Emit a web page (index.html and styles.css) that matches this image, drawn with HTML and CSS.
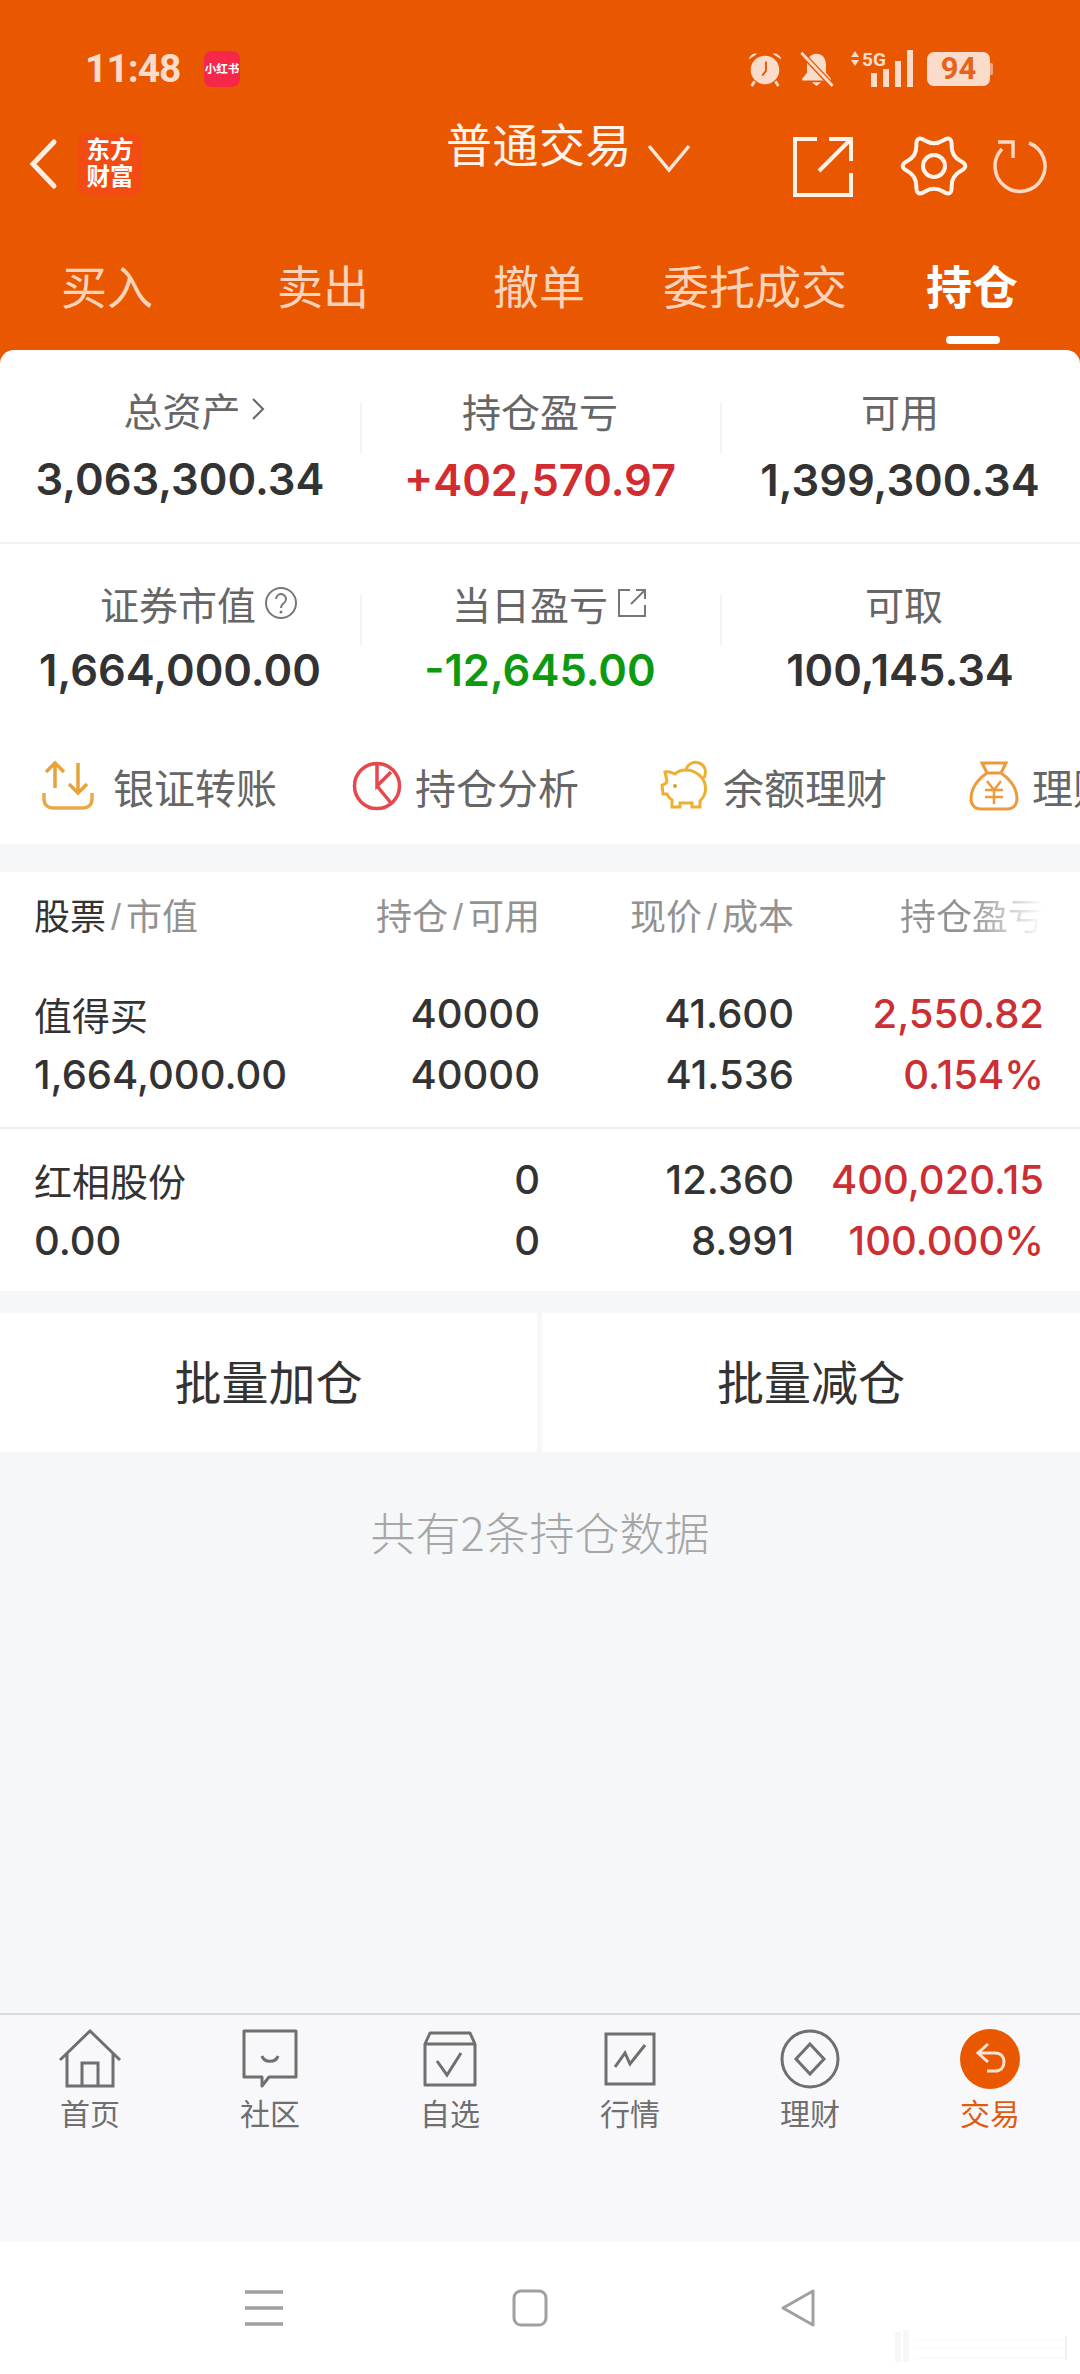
FILE: index.html
```html
<!DOCTYPE html>
<html lang="zh-CN">
<head>
<meta charset="utf-8">
<title>持仓</title>
<link rel="stylesheet" href="styles.css">
</head>
<body>
<div class="app">
  <header class="top">
    <div class="status">
      <div class="status-left">
        <span class="clock">11:48</span>
        <span class="app-badge">小红书</span>
      </div>
      <div class="status-right">
        <svg width="38" height="38" viewBox="0 0 40 40"><circle cx="20" cy="21" r="15" fill="#fbdccb"/><path d="M3 10a7 7 0 0 1 9-6zM37 10a7 7 0 0 0-9-6z" fill="#fbdccb"/><path d="M9 33l-3 5M31 33l3 5" stroke="#fbdccb" stroke-width="3"/><path d="M21 12v10l-4 5" fill="none" stroke="#e95800" stroke-width="2"/></svg>
        <svg width="37" height="38" viewBox="0 0 38 40"><path d="M19 4c-7 0-10 6-10 12v8l-5 6v2h30v-2l-5-6v-8c0-6-3-12-10-12zM14 34h10l-5 4z" fill="#fbdccb"/><path d="M3 3l33 35" stroke="#e95800" stroke-width="6"/><path d="M3 3l33 35" stroke="#fbdccb" stroke-width="3"/></svg>
        <svg width="64" height="40" viewBox="0 0 64 40"><path d="M2 8l4-6 4 6zM2 11l4 6 4-6z" fill="#fbdccb"/><text class="st-5g" x="13" y="17">5G</text><rect x="22" y="24" width="6" height="14" fill="#fbdccb"/><rect x="34" y="20" width="6" height="18" fill="#fbdccb"/><rect x="46" y="12" width="6" height="26" fill="#fbdccb"/><rect x="58" y="1" width="6" height="37" fill="#fbdccb"/></svg>
        <span class="battery">94</span>
      </div>
    </div>
    <div class="nav">
      <svg width="30" height="50" viewBox="0 0 30 50"><path d="M26 3L5 25l21 22" fill="none" stroke="#fdeee5" stroke-width="5" stroke-linecap="round"/></svg>
      <div class="logo"><span>东方</span><span>财富</span></div>
      <div class="nav-title">普通交易
        <svg width="44" height="28" viewBox="0 0 44 28"><path d="M2 2l20 24L42 2" fill="none" stroke="#fbe6da" stroke-width="3.500"/></svg>
      </div>
      <div class="nav-icons">
        <svg class="ic-share" width="60" height="60" viewBox="0 0 60 60"><path d="M24 2H2v56h56V36M36 2h22v22M57 3L26 34" fill="none" stroke="#fff3ec" stroke-width="4"/></svg>
        <svg class="ic-gear" width="62" height="60" viewBox="0 0 62 60"><path d="M22 3.500Q31 9 40 3.500Q49 -2 48.650 8.500Q48.300 19 57.650 24Q67 29 57.650 34Q48.300 39 48.650 49.500Q49 60 40 54.500Q31 49 22 54.500Q13 60 13.350 49.500Q13.700 39 4.350 34Q-5 29 4.350 24Q13.700 19 13.350 8.500Q13 -2 22 3.500z" fill="none" stroke="#fff3ec" stroke-width="4"/><circle cx="31" cy="29" r="11" fill="none" stroke="#fff3ec" stroke-width="4"/></svg>
        <svg class="ic-reload" width="54" height="54" viewBox="0 0 54 54"><path d="M35 3A25 25 0 1 1 8 9M4 2H19V18" fill="none" stroke="#fbd9c5" stroke-width="3.500"/></svg>
      </div>
    </div>
    <nav class="tabs">
      <span class="tab">买入</span>
      <span class="tab">卖出</span>
      <span class="tab">撤单</span>
      <span class="tab">委托成交</span>
      <span class="tab tab-on">持仓</span>
    </nav>
  </header>

  <section class="summary">
    <div class="sum-row">
      <div class="sum-cell"><div class="sum-label sum-label-up">总资产<svg width="14" height="24" viewBox="0 0 14 24"><path d="M2 2l10 10L2 22" fill="none" stroke="#666" stroke-width="2"/></svg></div><div class="sum-val">3,063,300.34</div></div>
      <div class="sum-cell sum-bar"><div class="sum-label">持仓盈亏</div><div class="sum-val red">+402,570.97</div></div>
      <div class="sum-cell sum-bar"><div class="sum-label">可用</div><div class="sum-val">1,399,300.34</div></div>
    </div>
    <div class="sum-row sum-row2">
      <div class="sum-cell"><div class="sum-label sum-label-wide">证券市值<svg width="34" height="34" viewBox="0 0 34 34"><circle cx="17" cy="17" r="15" fill="none" stroke="#777" stroke-width="2"/><path d="M12 13a5 5 0 1 1 8 4c-2 1.500-3 2-3 5" fill="none" stroke="#777" stroke-width="2"/><circle cx="17" cy="26" r="1.500" fill="#777"/></svg></div><div class="sum-val">1,664,000.00</div></div>
      <div class="sum-cell sum-bar"><div class="sum-label sum-label-mid">当日盈亏<svg width="32" height="32" viewBox="0 0 32 32"><path d="M14 3H3v26h26V18M20 3h9v9M28 4L15 17" fill="none" stroke="#777" stroke-width="2"/></svg></div><div class="sum-val green">-12,645.00</div></div>
      <div class="sum-cell sum-bar"><div class="sum-label sum-label-nudge">可取</div><div class="sum-val">100,145.34</div></div>
    </div>
    <div class="tools">
      <div class="tool tool-a"><svg width="52" height="50" viewBox="0 0 52 50"><path d="M13 27V2M4 11l9-9 9 9M36 2v30M27 23l9 9 9-9" fill="none" stroke="#e9a23b" stroke-width="3.500"/><path d="M2 32v6c0 6 4 9 9 9h30c5 0 9-3 9-9v-6" fill="none" stroke="#eaa848" stroke-width="3.500"/></svg><span>银证转账</span></div>
      <div class="tool tool-b"><svg width="50" height="50" viewBox="0 0 50 50"><circle cx="25" cy="25" r="22.500" fill="none" stroke="#e5484d" stroke-width="3.500"/><path d="M25 3v22l14-14M25 25l14 17" fill="none" stroke="#e5484d" stroke-width="3.500"/></svg><span>持仓分析</span></div>
      <div class="tool tool-c"><svg width="50" height="50" viewBox="0 0 50 50"><path d="M26 9c-4 0-8 1-11 4-2-1-6-3-10-2l2 9c0 3-3 3-5 4l1 9h4c1 3 2 4 5 6v7h8v-4h12v4h8v-6c6-6 7-14 3-22-4-5-10-9-17-9z" fill="none" stroke="#eeb030" stroke-width="3"/><path d="M26 9C27 3 34 0 39 2c6 2 8 8 5 15" fill="none" stroke="#eeb030" stroke-width="3"/><circle cx="15" cy="25" r="2" fill="#e0a030"/></svg><span>余额理财</span></div>
      <div class="tool tool-d"><svg width="50" height="50" viewBox="0 0 50 50"><path d="M13 2h24l-5 10H18zM18 12C8 19 2 28 2 38c0 6 4 10 10 10h26c6 0 10-4 10-10 0-10-6-19-16-26" fill="none" stroke="#ee9a3c" stroke-width="3"/><path d="M18 20l7 9 7-9M16 29h18M16 36h18M25 29v14" fill="none" stroke="#ee9a3c" stroke-width="2.500"/></svg><span>理财</span></div>
    </div>
  </section>

  <section class="holdings">
    <div class="h-row h-head">
      <div class="h-c1"><b>股票</b><i>/</i>市值</div>
      <div class="h-c2">持仓<i>/</i>可用</div>
      <div class="h-c3">现价<i>/</i>成本</div>
      <div class="h-c4 h-fade">持仓盈亏</div>
    </div>
    <div class="h-row h-item">
      <div class="h-c1"><div class="h-name">值得买</div><div>1,664,000.00</div></div>
      <div class="h-c2"><div>40000</div><div>40000</div></div>
      <div class="h-c3"><div>41.600</div><div>41.536</div></div>
      <div class="h-c4 red"><div>2,550.82</div><div>0.154%</div></div>
    </div>
    <div class="h-row h-item h-line">
      <div class="h-c1"><div class="h-name">红相股份</div><div>0.00</div></div>
      <div class="h-c2"><div>0</div><div>0</div></div>
      <div class="h-c3"><div>12.360</div><div>8.991</div></div>
      <div class="h-c4 red"><div>400,020.15</div><div>100.000%</div></div>
    </div>
  </section>

  <div class="batch">
    <div class="batch-btn">批量加仓</div>
    <div class="batch-btn">批量减仓</div>
  </div>

  <main class="rest">共有2条持仓数据</main>

  <footer class="tabbar">
    <div class="tb"><svg width="64" height="60" viewBox="0 0 64 60"><path d="M2 31L32 2l30 29M9 25v32h46V25M24 57V34h16v23" fill="none" stroke="#6f6f6f" stroke-width="3"/></svg><span>首页</span></div>
    <div class="tb"><svg width="56" height="60" viewBox="0 0 56 60"><path d="M2 2h52v46H27l-7 9v-9H2z" fill="none" stroke="#6f6f6f" stroke-width="3" stroke-linejoin="round"/><path d="M20 27c2 7 14 7 16 0" fill="none" stroke="#6f6f6f" stroke-width="3"/></svg><span>社区</span></div>
    <div class="tb"><svg width="54" height="56" viewBox="0 0 54 56"><path d="M2 13L7 2h40l5 11v41H2zM2 13h50" fill="none" stroke="#6f6f6f" stroke-width="3" stroke-linejoin="round"/><path d="M14 30l10 14 14-22" fill="none" stroke="#6f6f6f" stroke-width="3"/></svg><span>自选</span></div>
    <div class="tb"><svg width="52" height="54" viewBox="0 0 52 54"><path d="M2 2h48v50H2z" fill="none" stroke="#6f6f6f" stroke-width="3"/><path d="M11 35l10-14 5 11 15-19" fill="none" stroke="#6f6f6f" stroke-width="3"/></svg><span>行情</span></div>
    <div class="tb"><svg width="60" height="60" viewBox="0 0 60 60"><circle cx="30" cy="30" r="28" fill="none" stroke="#6f6f6f" stroke-width="3"/><path d="M30 15l14 15-14 15-14-15z" fill="none" stroke="#6f6f6f" stroke-width="3"/></svg><span>理财</span></div>
    <div class="tb tb-on"><svg width="60" height="60" viewBox="0 0 60 60"><circle cx="30" cy="30" r="30" fill="#e95800"/><path d="M28 15L18 24l10 9M18 24h17c6 0 9 4 9 9s-3 9-9 9H27" fill="none" stroke="#fde3d3" stroke-width="3"/></svg><span>交易</span></div>
  </footer>

  <div class="sysbar">
    <svg width="38" height="38" viewBox="0 0 38 38"><path d="M0 3h38M0 19h38M0 35h38" stroke="#a0a0a0" stroke-width="3.500"/></svg>
    <svg width="36" height="38" viewBox="0 0 36 38"><rect x="2" y="2" width="32" height="34" rx="7" fill="none" stroke="#a0a0a0" stroke-width="3"/></svg>
    <svg width="36" height="38" viewBox="0 0 36 38"><path d="M33 2L3 19l30 17z" fill="none" stroke="#a0a0a0" stroke-width="3" stroke-linejoin="round"/></svg>
    <!-- faint watermark in the corner -->
    <svg class="wm" width="180" height="34" viewBox="0 0 180 34"><path d="M8 2v30M16 0v32" stroke="#f7f7f7" stroke-width="6"/><path d="M24 10h150M24 18h150M24 28h150" stroke="#fcfcfc" stroke-width="2"/><path d="M176 6v24" stroke="#f0f0f0" stroke-width="2"/></svg>
  </div>
</div>
</body>
</html>
```

FILE: styles.css
```css
* {
    box-sizing: border-box;
}

html, body {
    margin: 0;
    padding: 0;
}

body {
    width: 1080px;
    height: 2374px;
    overflow: hidden;
    font-family: "Liberation Sans", "Noto Sans CJK SC", sans-serif;
    background: #fff;
}

.app {
    display: flex;
    flex-direction: column;
    width: 1080px;
    height: 2374px;
    background: #f6f7f9;
}

svg {
    display: block;
    flex: none;
    overflow: visible;
}

/* orange head */
.top {
    height: 364px;
    background: #e95800;
    color: #fff;
}

.status {
    display: flex;
    justify-content: space-between;
    align-items: center;
    height: 50px;
    margin-top: 44px;
    padding: 0 90px 0 85px;
}

.status-left, .status-right {
    display: flex;
    align-items: center;
}

.clock {
    width: 119px;
    font-family: Roboto, sans-serif;
    font-size: 39px;
    font-weight: 700;
    letter-spacing: -1px;
    color: #fbdccb;
}

.app-badge {
    width: 36px;
    height: 36px;
    border-radius: 8px;
    background: #f5284a;
    color: #fff;
    font-size: 11.500px;
    font-weight: 700;
    line-height: 36px;
    text-align: center;
    white-space: nowrap;
}

.status-right { gap: 14px; }

.st-5g {
    font: 700 19px Roboto, sans-serif;
    fill: #fbdccb;
}

.battery {
    position: relative;
    width: 63px;
    height: 34px;
    border-radius: 7px;
    background: #fbdccb;
    color: #e5631b;
    font: 700 31px/34px Roboto, sans-serif;
    text-align: center;
}

.battery::after {
    content: "";
    position: absolute;
    left: 100%;
    top: 11px;
    width: 3px;
    height: 12px;
    border-radius: 0 2px 2px 0;
    background: #f2a47a;
}

.nav {
    display: flex;
    align-items: center;
    height: 140px;
    padding: 0 32px 0 28px;
}

.logo {
    display: flex;
    flex-direction: column;
    justify-content: center;
    width: 64px;
    height: 62px;
    margin-left: 20px;
    border-radius: 9px;
    background: #f34b14;
    color: #fff;
    font-size: 23.500px;
    font-weight: 700;
    line-height: 27px;
    text-align: center;
}

.nav-title {
    display: flex;
    align-items: center;
    gap: 15px;
    margin-left: 304px;
    margin-top: -44px;
    font-size: 46px;
    letter-spacing: 0.5px;
    color: #fff3ec;
    white-space: nowrap;
}

.nav-title svg {
    margin-top: 32px;
}

.nav-icons {
    display: flex;
    align-items: center;
    margin-left: auto;
    margin-top: 6px;
}

.ic-gear { margin-left: 50px; }
.ic-reload { margin-left: 29px; }

.tabs {
    display: grid;
    grid-template-columns: 214px 218px 214px 218px 216px;
    height: 116px;
    padding-top: 22px;
}

.tab {
    font-size: 46px;
    line-height: 64px;
    text-align: center;
    color: #fbd3bb;
    white-space: nowrap;
}

.tab-on {
    position: relative;
    color: #fff;
    font-weight: 700;
}

.tab-on::after {
    content: "";
    position: absolute;
    left: 82px;
    top: 80px;
    width: 54px;
    height: 8px;
    border-radius: 4px;
    background: #fff;
}

/* account summary, rounded top sits over the orange */
.summary {
    height: 494px;
    margin-top: -14px;
    border-radius: 14px 14px 0 0;
    background: #fff;
}

.sum-row {
    display: grid;
    grid-template-columns: 360px 360px 360px;
    height: 194px;
    padding-top: 36px;
    border-bottom: 2px solid #f2f2f2;
}

.sum-row2 {
    height: 188px;
    padding-top: 35px;
    border-bottom: 0;
}

.sum-cell {
    position: relative;
    text-align: center;
}

.sum-bar::before {
    content: "";
    position: absolute;
    left: 0;
    top: 17px;
    width: 2px;
    height: 50px;
    background: #f4f4f4;
}

.sum-row2 .sum-bar::before { top: 16px; }

.sum-label {
    display: flex;
    justify-content: center;
    align-items: center;
    gap: 8px;
    height: 48px;
    font-size: 39px;
    color: #666;
}

.sum-label-up {
    margin-top: -1px;
    margin-bottom: 1px;
    padding-left: 28px;
    gap: 10px;
}

.sum-label-wide { padding-left: 38px; }
.sum-label-mid { padding-left: 20px; }
.sum-label-nudge { padding-left: 8px; }

.sum-val {
    margin-top: 20px;
    font-family: Inter, sans-serif;
    font-size: 43.500px;
    line-height: 52px;
    font-weight: 600;
    color: #333;
}

.sum-val.red { color: #d22b30; }
.sum-val.green { color: #0d9a10; }

.sum-row2 .sum-val { margin-top: 17px; }

.tools {
    display: flex;
    align-items: center;
    height: 112px;
    padding: 0 0 5px 42px;
    overflow: hidden;
    white-space: nowrap;
    font-size: 41px;
    color: #666;
}

.tool {
    display: flex;
    align-items: center;
    flex: none;
    gap: 19px;
}

.tool-a { width: 310px; }
.tool-b { width: 308px; gap: 13px; }
.tool-c { width: 309px; gap: 13px; }
.tool-d { gap: 13px; }

/* holdings table */
.holdings {
    margin-top: 28px;
    background: #fff;
}

.h-row {
    display: grid;
    grid-template-columns: 34px 270px 236px 254px 250px 36px;
    grid-template-areas: ". a b c d .";
}

.h-c1 { grid-area: a; }
.h-c2 { grid-area: b; text-align: right; }
.h-c3 { grid-area: c; text-align: right; }
.h-c4 { grid-area: d; text-align: right; }

.h-head {
    height: 88px;
    padding-bottom: 5px;
    align-items: center;
    font-size: 36px;
    color: #929292;
}

.h-head b {
    font-weight: 400;
    color: #333;
}

.h-head i {
    font-style: normal;
    margin: 0 5px;
    color: #999;
}

.h-fade {
    white-space: nowrap;
    background: linear-gradient(90deg, #929292 70%, #fff 100%);
    -webkit-background-clip: text;
    background-clip: text;
    color: transparent;
}

.h-item {
    height: 167px;
    padding-top: 23px;
    font-family: Inter, "Noto Sans CJK SC", sans-serif;
    font-size: 40px;
    font-weight: 500;
    line-height: 61px;
    color: #333;
}

.h-item .red { color: #cc2f33; }

.h-name {
    font-family: "Noto Sans CJK SC", sans-serif;
    font-size: 38px;
    font-weight: 400;
}

.h-line {
    height: 164px;
    padding-top: 20px;
    border-top: 2px solid #f0f0f0;
}

/* batch buttons */
.batch {
    display: grid;
    grid-template-columns: 537px 538px;
    gap: 5px;
    height: 139px;
    margin-top: 22px;
}

.batch-btn {
    padding-top: 2px;
    background: #fff;
    font-size: 47px;
    line-height: 137px;
    text-align: center;
    color: #333;
}

.rest {
    flex: 1;
    padding-top: 50px;
    font-family: "Noto Sans CJK SC", sans-serif;
    font-size: 45px;
    font-weight: 300;
    line-height: 60px;
    text-align: center;
    color: #a6a6a6;
}

/* bottom tabs */
.tabbar {
    display: grid;
    grid-template-columns: repeat(6, 180px);
    height: 230px;
    border-top: 2px solid #d9dadc;
    background: #f8f8fa;
}

.tb {
    display: flex;
    flex-direction: column;
    align-items: center;
    font-size: 30px;
    color: #6f6f6f;
}

.tb svg {
    height: 60px;
    margin-top: 14px;
}

.tb span {
    margin-top: 6px;
    line-height: 40px;
}

.tb-on { color: #e05a10; }

.sysbar {
    position: relative;
    display: grid;
    grid-template-columns: 264px 268px 268px;
    justify-items: center;
    align-items: center;
    height: 132px;
    padding: 0 0 0 132px;
    margin-top: -1px;
    background: #fff;
}

.wm {
    position: absolute;
    left: 890px;
    top: 88px;
}
```
